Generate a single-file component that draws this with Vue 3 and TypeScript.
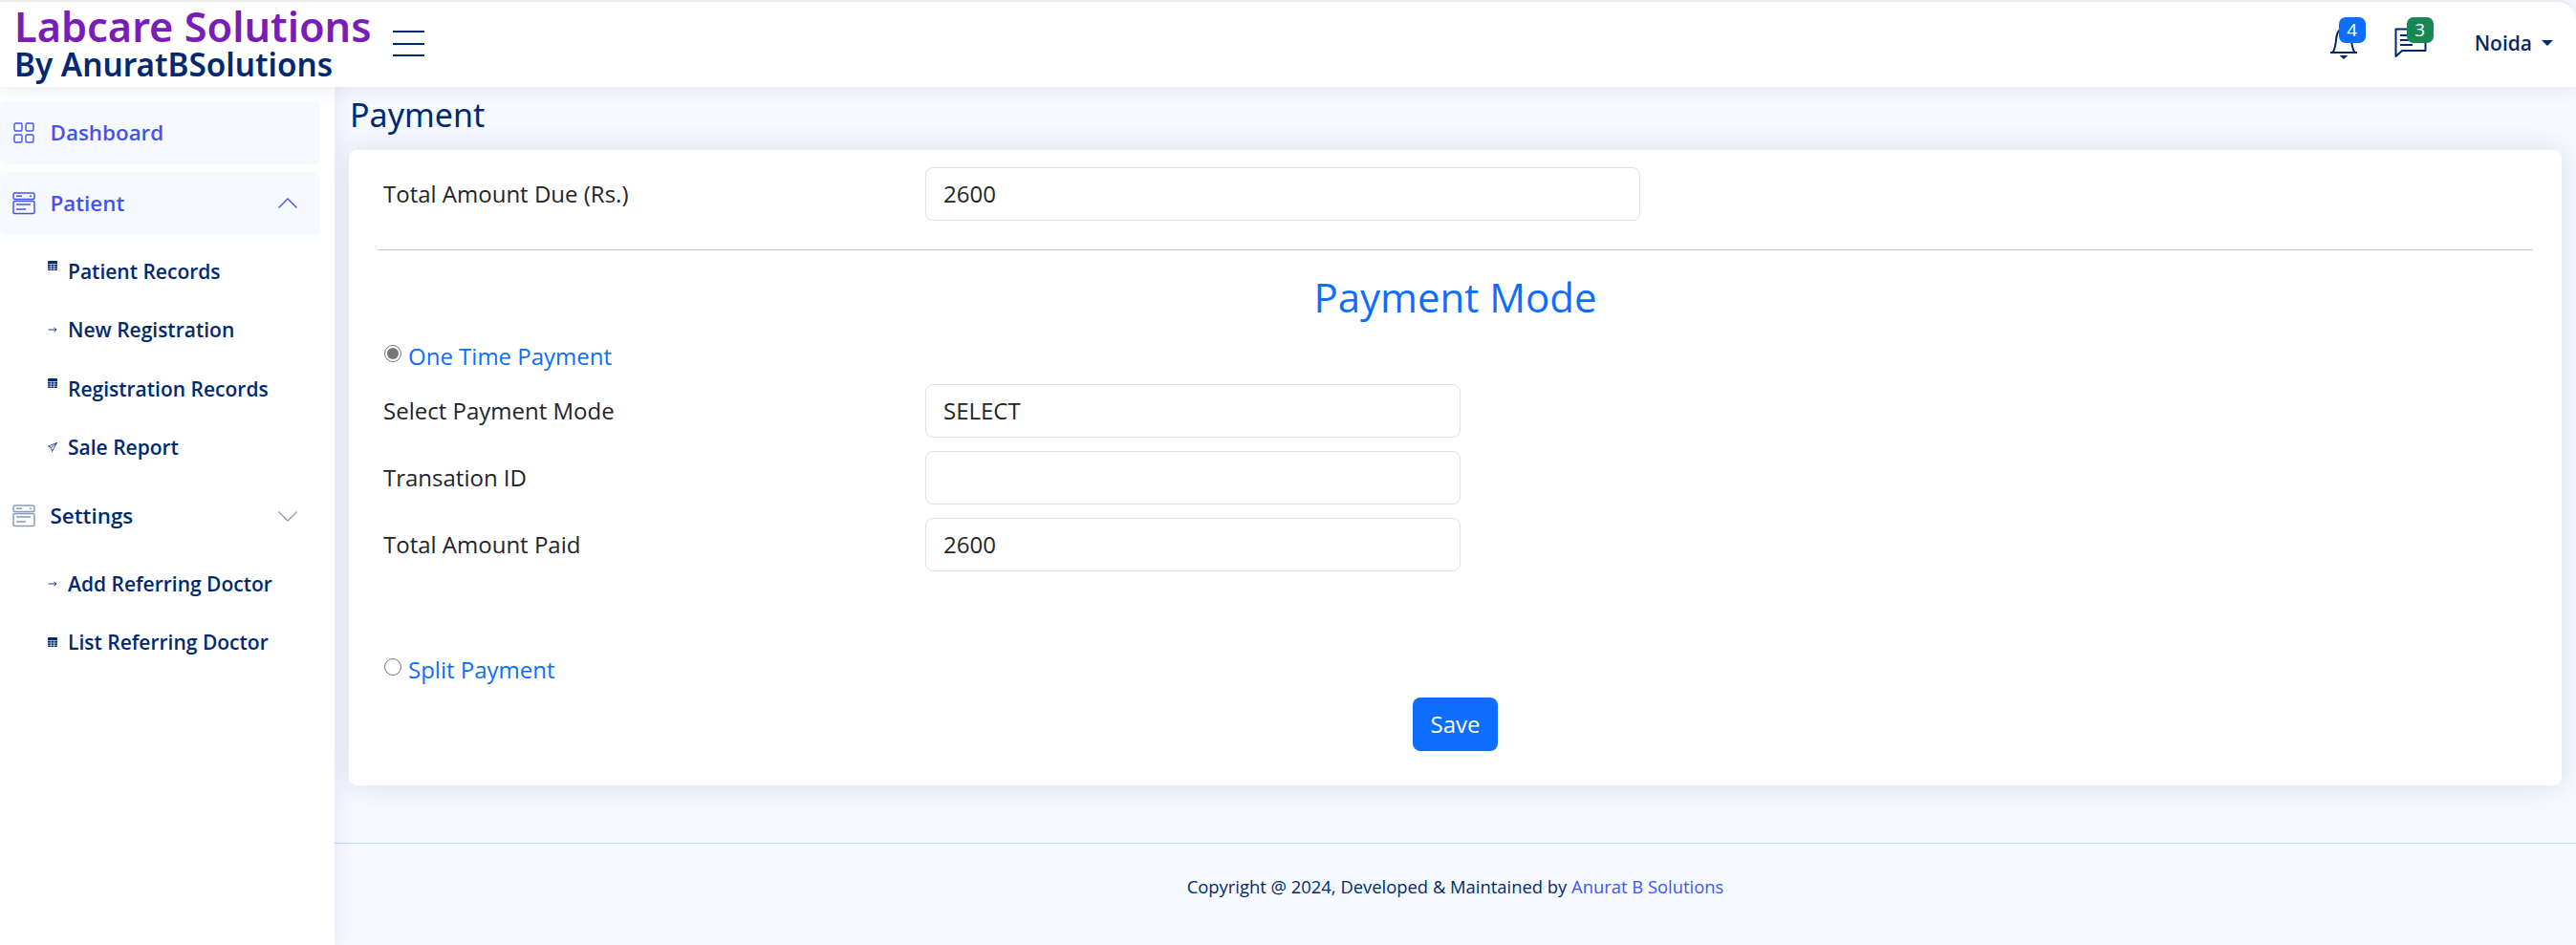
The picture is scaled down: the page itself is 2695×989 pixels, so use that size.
<script setup lang="ts">
interface Sub { label: string; icon: 'table' | 'arrow' | 'send' }
const patientSubs: Sub[] = [
  { label: 'Patient Records', icon: 'table' },
  { label: 'New Registration', icon: 'arrow' },
  { label: 'Registration Records', icon: 'table' },
  { label: 'Sale Report', icon: 'send' },
]
const settingSubs: Sub[] = [
  { label: 'Add Referring Doctor', icon: 'arrow' },
  { label: 'List Referring Doctor', icon: 'table' },
]
</script>

<template>
  <div class="page">
    <header class="topbar">
      <div class="brand">
        <div class="brand-a">Labcare Solutions</div>
        <div class="brand-b">By AnuratBSolutions</div>
      </div>
      <button class="burger" aria-label="menu"><span></span><span></span><span></span></button>
      <div class="top-right">
        <div class="bell-wrap">
          <svg width="30" height="36" viewBox="0 0 30 36" fill="none" stroke="#012970" stroke-width="2">
            <path d="M1 29h28M3.500 29c2.500-4 3-8 3.500-13C7.500 9 10 4 15 4s7.500 5 8 12c.5 5 1 9 3.500 13" />
            <path d="M10.500 32h9L15 36z" fill="#012970" stroke="none" />
          </svg>
          <span class="badge blue">4</span>
        </div>
        <div class="msg-wrap">
          <svg width="34" height="32" viewBox="0 0 34 32" fill="none" stroke="#012970" stroke-width="2">
            <path d="M1.500 30V1.500h31V24H8z" stroke-linejoin="round" />
            <path d="M6 8h15M6 13h18M6 18h13" />
          </svg>
          <span class="badge green">3</span>
        </div>
        <div class="user">Noida<i class="caret"></i></div>
      </div>
    </header>

    <div class="body">
      <aside class="sidebar">
        <div class="nav-item active">
          <svg class="nav-ico" width="24" height="24" viewBox="0 0 24 24" fill="none" stroke="#4154f1" stroke-width="1.400">
            <rect x="2" y="2" width="8" height="8" rx="1.500" /><rect x="14" y="2" width="8" height="8" rx="1.500" />
            <rect x="2" y="14" width="8" height="8" rx="1.500" /><rect x="14" y="14" width="8" height="8" rx="1.500" />
          </svg>
          <span class="nav-text">Dashboard</span>
        </div>
        <div class="nav-item active second">
          <svg class="nav-ico" width="24" height="24" viewBox="0 0 24 24" fill="none" stroke="#4154f1" stroke-width="1.500">
            <rect x="1" y="1" width="22" height="6.500" rx="1.500" /><rect x="1" y="9.500" width="22" height="13" rx="1.500" />
            <path d="M4 4.300h6M18 4.300h2M4 13h15M4 18h10" />
          </svg>
          <span class="nav-text">Patient</span>
          <svg class="chev" width="20" height="12" viewBox="0 0 20 12" fill="none" stroke="#4154f1" stroke-width="1.300"><path d="M0.500 10.500 10 1l9.500 9.500" /></svg>
        </div>
        <ul class="subs first">
          <li v-for="s in patientSubs" :key="s.label">
            <svg v-if="s.icon === 'table'" class="sub-ico up" width="10" height="10" viewBox="0 0 10 10"><rect width="10" height="10" rx="1" fill="#012970" /><path d="M0 3.500h10M0 6h10M0 8.300h10M3.300 3v7M6.600 3v7" stroke="#fff" stroke-width=".6" /></svg>
            <svg v-else-if="s.icon === 'arrow'" class="sub-ico" width="10" height="10" viewBox="0 0 10 10" fill="none" stroke="#012970" stroke-width=".9"><path d="M0.500 5h8.500M6.500 3l2.500 2-2.500 2" /></svg>
            <svg v-else class="sub-ico" width="10" height="10" viewBox="0 0 10 10" fill="none" stroke="#012970" stroke-width=".8"><path d="M9.500.5.500 4l3 1.500 1 4zM3.500 5.500 9.500.5" /></svg>
            <span>{{ s.label }}</span>
          </li>
        </ul>
        <div class="nav-item plain">
          <svg class="nav-ico" width="24" height="24" viewBox="0 0 24 24" fill="none" stroke="#899bbd" stroke-width="1.500">
            <rect x="1" y="1" width="22" height="6.500" rx="1.500" /><rect x="1" y="9.500" width="22" height="13" rx="1.500" />
            <path d="M4 4.300h6M18 4.300h2M4 13h15M4 18h10" />
          </svg>
          <span class="nav-text">Settings</span>
          <svg class="chev" width="20" height="12" viewBox="0 0 20 12" fill="none" stroke="#899bbd" stroke-width="1.300"><path d="M0.500 1.500 10 11l9.500-9.500" /></svg>
        </div>
        <ul class="subs">
          <li v-for="s in settingSubs" :key="s.label">
            <svg v-if="s.icon === 'table'" class="sub-ico" width="10" height="10" viewBox="0 0 10 10"><rect width="10" height="10" rx="1" fill="#012970" /><path d="M0 3.500h10M0 6h10M0 8.300h10M3.300 3v7M6.600 3v7" stroke="#fff" stroke-width=".6" /></svg>
            <svg v-else class="sub-ico" width="10" height="10" viewBox="0 0 10 10" fill="none" stroke="#012970" stroke-width=".9"><path d="M0.500 5h8.500M6.500 3l2.500 2-2.500 2" /></svg>
            <span>{{ s.label }}</span>
          </li>
        </ul>
      </aside>

      <main class="main">
        <div class="content">
          <h1 class="title">Payment</h1>
          <section class="card">
            <div class="row due">
              <label>Total Amount Due (Rs.)</label>
              <input class="field wide" value="2600" />
            </div>
            <hr class="rule" />
            <h2 class="mode">Payment Mode</h2>
            <div class="radio-line">
              <span class="radio on"></span><span class="radio-label">One Time Payment</span>
            </div>
            <div class="row r1">
              <label>Select Payment Mode</label>
              <input class="field" value="SELECT" />
            </div>
            <div class="row r2">
              <label>Transation ID</label>
              <input class="field" value="" />
            </div>
            <div class="row r2">
              <label>Total Amount Paid</label>
              <input class="field" value="2600" />
            </div>
            <div class="radio-line split">
              <span class="radio"></span><span class="radio-label">Split Payment</span>
            </div>
            <div class="actions"><button class="save">Save</button></div>
          </section>
        </div>
        <footer class="foot">Copyright @ 2024, Developed &amp; Maintained by <a>Anurat B Solutions</a></footer>
      </main>
    </div>
  </div>
</template>

<style>
html, body { margin: 0; background: #f6f9ff; }
</style>

<style scoped>
.page {
  width: 2695px;
  height: 989px;
  overflow: hidden;
  display: flex;
  flex-direction: column;
  font-family: "Open Sans", sans-serif;
  background: #f6f9ff;
  color: #212529;
}
.topbar {
  height: 91px;
  flex: none;
  box-sizing: border-box;
  border-top: 2px solid #ebedf0;
  border-top-right-radius: 20px;
  background: #fff;
  display: flex;
  align-items: center;
  padding-left: 15px;
  box-shadow: 0 2px 20px rgba(1, 41, 112, 0.1);
  position: relative;
  z-index: 3;
}
.brand { width: 396px; font-family: "Noto Sans", sans-serif; font-weight: 600; white-space: nowrap; }
.brand-a { color: #7a1cb8; font-size: 43.300px; line-height: 43px; margin-top: -3px; }
.brand-b { color: #012970; font-size: 33.300px; line-height: 36px; margin-top: 0; }
.burger {
  width: 33px;
  height: 27px;
  margin-top: -2px;
  padding: 0;
  background: none;
  border: 0;
  display: flex;
  flex-direction: column;
  justify-content: space-between;
}
.burger span { display: block; height: 2px; background: #012970; }
.top-right { margin-left: auto; display: flex; align-items: center; padding-right: 24px; }
.bell-wrap, .msg-wrap { position: relative; display: flex; }
.bell-wrap { margin-right: 38px; margin-bottom: 5px; }
.msg-wrap { margin-right: 50px; margin-bottom: 3px; }
.badge {
  position: absolute;
  width: 28px;
  height: 27px;
  border-radius: 7px;
  color: #fff;
  font-size: 19px;
  line-height: 27px;
  text-align: center;
}
.badge.blue { background: #0d6efd; left: 10px; top: -8px; }
.badge.green { background: #198754; left: 13px; top: -11px; }
.user { color: #012970; font-size: 21px; font-weight: 600; display: flex; align-items: center; margin-bottom: 3px; }
.caret {
  margin-left: 10px;
  width: 0;
  height: 0;
  border-left: 6px solid transparent;
  border-right: 6px solid transparent;
  border-top: 6px solid #012970;
}
.body { flex: 1; display: flex; min-height: 0; }
.sidebar {
  width: 350px;
  flex: none;
  box-sizing: border-box;
  background: #fff;
  padding: 15px 15px 0 0;
  box-shadow: 0 0 20px rgba(1, 41, 112, 0.1);
  position: relative;
  z-index: 2;
}
.nav-item {
  height: 66px;
  display: flex;
  align-items: center;
  padding-left: 13px;
  border-radius: 5px;
  font-size: 22.400px;
  font-weight: 600;
  color: #012970;
}
.nav-text { margin-bottom: 2px; }
.nav-item .nav-ico { margin-right: 15.500px; flex: none; }
.nav-item.active { background: #f6f9ff; color: #4154f1; }
.nav-item.second { margin-top: 8px; }
.chev { margin-left: auto; margin-right: 24px; }
.subs { list-style: none; margin: 0 0 8px; padding: 7px 0 0; }
.subs li {
  height: 61.500px;
  display: flex;
  align-items: center;
  padding-left: 50px;
  font-size: 21px;
  font-weight: 600;
  color: #012970;
}
.sub-ico { margin-right: 11px; flex: none; }
.sub-ico.up { transform: translateY(-6px); }
.main { flex: 1; min-width: 0; display: flex; flex-direction: column; }
.content { padding: 0 15px; flex: none; height: 791px; box-sizing: border-box; }
.title {
  margin: 0 0 8px;
  height: 58px;
  display: flex;
  align-items: center;
  font-family: "Noto Sans", sans-serif;
  font-weight: 400;
  font-size: 34px;
  color: #012970;
  padding-left: 1px;
}
.card {
  height: 665px;
  box-sizing: border-box;
  background: #fff;
  border-radius: 8px;
  box-shadow: 0 0 30px rgba(1, 41, 112, 0.13);
  padding: 18px 30px 0;
}
.row { display: flex; align-items: center; padding-left: 5px; }
.row label { width: 568px; font-size: 24px; flex: none; margin-left: 1px; margin-right: -1px; margin-bottom: 2px; }
.field {
  box-sizing: border-box;
  width: 560px;
  height: 56px;
  border: 1px solid #dee2e6;
  border-radius: 8px;
  padding: 0 18px 2px;
  font: 24px "Open Sans", sans-serif;
  color: #212529;
  background: #fff;
  outline: none;
}
.field.wide { width: 748px; }
.rule { border: 0; border-top: 1px solid #c4c4c4; margin: 30px 0 0; }
.mode {
  margin: 0;
  height: 93px;
  padding-top: 4px;
  display: flex;
  align-items: center;
  justify-content: center;
  font-size: 42px;
  font-weight: 400;
  color: #0d6efd;
  line-height: 1;
  box-sizing: border-box;
}
.radio-line { display: flex; align-items: center; height: 34px; padding-left: 7px; }
.radio {
  box-sizing: border-box;
  width: 18px;
  height: 18px;
  border: 1.500px solid #767676;
  border-radius: 50%;
  margin-right: 7px;
  background: #fff;
  position: relative;
  top: -2px;
}
.radio.on::after {
  content: "";
  position: absolute;
  inset: 2px;
  border-radius: 50%;
  background: #767676;
}
.radio-label { font-size: 24px; color: #0d6efd; }
.r1 { margin-top: 13px; }
.r2 { margin-top: 14px; }
.split { margin-top: 85px; }
.actions { display: flex; justify-content: center; margin-top: 13px; }
.save {
  width: 89px;
  height: 56px;
  border: 0;
  border-radius: 8px;
  background: #0d6efd;
  color: #fff;
  font: 24px "Open Sans", sans-serif;
  padding: 0 0 2px;
}
.foot {
  border-top: 1px solid #c4d8ff;
  height: 90px;
  display: flex;
  align-items: center;
  justify-content: center;
  white-space: pre-wrap;
  font-size: 18.400px;
  color: #012970;
  box-sizing: border-box;
}
.foot a { color: #4154f1; }
</style>
